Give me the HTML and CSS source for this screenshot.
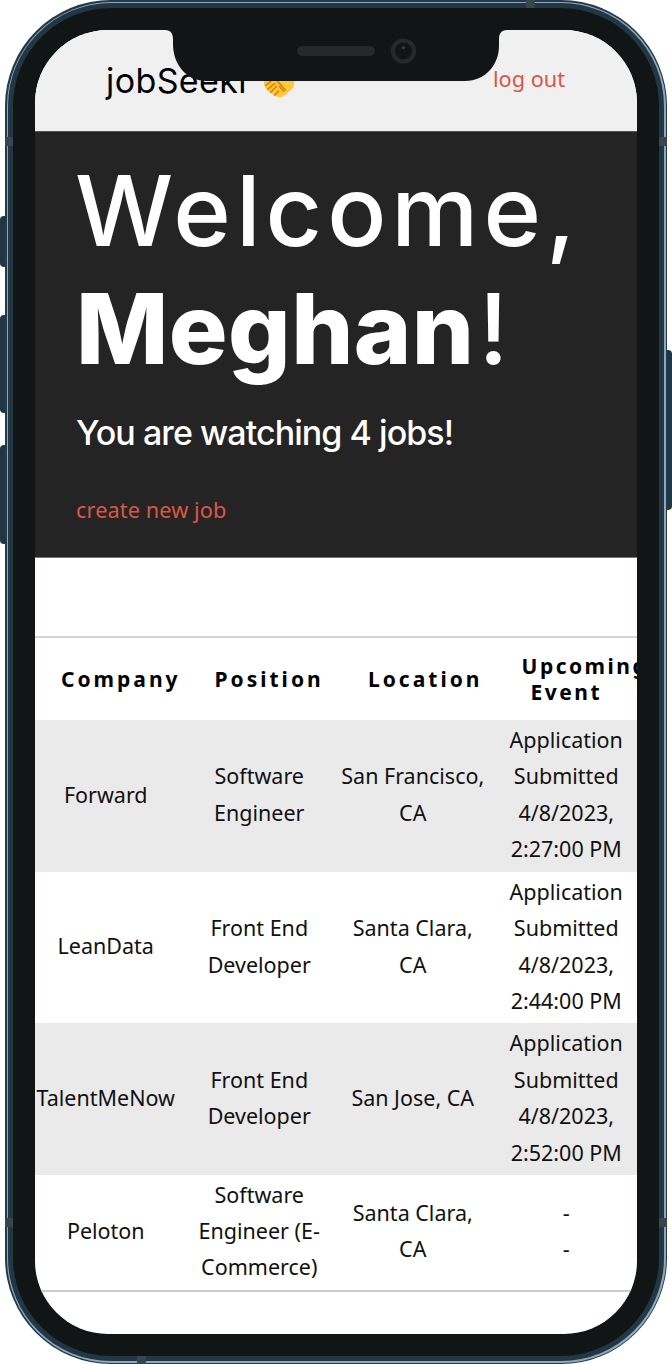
FILE: index.html
```html
<!DOCTYPE html>
<html lang="en">
<head>
<meta charset="utf-8">
<title>jobSeekr</title>
<link rel="stylesheet" href="styles.css">
</head>
<body>
<div class="device">
  <i class="key key-mute"></i><i class="key key-up"></i><i class="key key-down"></i><i class="key key-power"></i>
  <div class="edge"><div class="shine"><div class="rim"><div class="bezel">
    <div class="screen">
      <header class="topbar">
        <div class="brand">jobSeekr
          <svg class="hands" viewBox="0 0 34 34"><path d="M1 12 8 5l9 3 9-3 7 7-1 9c-1 4-4 5-6 7-2 3-4 3-5 4-3 2-5 2-8 0-2-1-4-3-6-4-3-2-5-5-6-8z" fill="#ffc83d"/><path d="M3 21l5-4M5 25l7-6M8 28l6-6M12 31l4-4M12 14l7 7 4 5M17 22l4 5" fill="none" stroke="#d98a12" stroke-width="1.800" stroke-linecap="round"/></svg>
        </div>
        <a class="link logout">log out</a>
      </header>
      <section class="hero">
        <h1><span class="hello">Welcome,</span><span class="name"><b>Meghan</b>!</span></h1>
        <p class="count">You are watching 4 jobs!</p>
        <a class="link create">create new job</a>
      </section>
      <table class="jobs">
        <thead><tr><th>Company</th><th>Position</th><th>Location</th><th class="event">Upcoming<br>Event</th></tr></thead>
        <tbody>
          <tr><td>Forward</td><td>Software<br>Engineer</td><td>San Francisco,<br>CA</td><td>Application<br>Submitted<br>4/8/2023,<br>2:27:00 PM</td></tr>
          <tr><td>LeanData</td><td>Front End<br>Developer</td><td>Santa Clara,<br>CA</td><td>Application<br>Submitted<br>4/8/2023,<br>2:44:00 PM</td></tr>
          <tr><td>TalentMeNow</td><td>Front End<br>Developer</td><td>San Jose, CA</td><td>Application<br>Submitted<br>4/8/2023,<br>2:52:00 PM</td></tr>
          <tr class="last"><td>Peloton</td><td>Software<br>Engineer (E-<br>Commerce)</td><td>Santa Clara,<br>CA</td><td>-<br>-</td></tr>
        </tbody>
      </table>
    </div>
  </div></div></div></div>
  <svg class="notch" viewBox="0 0 342 56" width="342" height="56"><path d="M0 0h342v5c-6 0-8 4-8 9v7c0 18-13 35-34 35H42C21 56 8 39 8 19v-5c0-5-2-9-8-9z" fill="#111516"/><rect x="132" y="21" width="78" height="10" rx="5" fill="#25292b"/><circle cx="238.500" cy="26" r="10.500" fill="none" stroke="#25292b" stroke-width="4.200"/><circle cx="238.500" cy="22.800" r="1.800" fill="#33383a"/></svg>
  <i class="band b1"></i><i class="band b2"></i><i class="band b3"></i><i class="band b4"></i><i class="band b5"></i><i class="band b6"></i>
</div>
</body>
</html>
```
FILE: styles.css
```css
* { box-sizing: border-box; }
body { margin: 0; background: #fff; font-family: "Noto Sans", sans-serif; color: #111; }
.device { position: relative; width: 672px; height: 1364px; padding: 0 5px; overflow: hidden; }
.edge { position: relative; height: 1364px; padding: 1.5px; border-radius: 106px; background: #24394a; }
.shine { height: 100%; padding: 1.5px; border-radius: 104.500px; background: #8aa9be; }
.rim { height: 100%; padding: 5px; border-radius: 103px; background: #223743; }
.bezel { height: 100%; padding: 22px; border-radius: 98px; background: #111516; }
.screen { height: 1304px; border-radius: 73px; background: #fff; overflow: hidden; }

.key { position: absolute; width: 12px; border-radius: 4px; background: #203643; }
.key-mute { left: 0; top: 216px; height: 51px; }
.key-up { left: 0; top: 315px; height: 98px; }
.key-down { left: 0; top: 445px; height: 99px; }
.key-power { right: 0; top: 350px; height: 160px; }
.band { position: absolute; background: #38454b; }
.b1 { left: 526px; top: 0; width: 9px; height: 8px; }
.b2 { left: 5px; top: 137px; width: 8px; height: 9px; }
.b3 { right: 5px; top: 137px; width: 8px; height: 9px; }
.b4 { left: 5px; top: 1218px; width: 8px; height: 9px; }
.b5 { right: 5px; top: 1218px; width: 8px; height: 9px; }
.b6 { left: 137px; top: 1356px; width: 9px; height: 8px; }
.notch { position: absolute; left: 165px; top: 25px; }

.topbar { display: flex; justify-content: space-between; height: 102px; padding: 28px 72px 0 71px; background: #f0f0f0; border-bottom: 1px solid #555; }
.brand { display: flex; gap: 11px; font: 400 34px/45px Inter, sans-serif; color: #000; letter-spacing: 0.400px; }
.hands { width: 33px; height: 33px; margin-top: 7px; }
.link { color: #dc5644; font-size: 21.700px; }
.logout { line-height: 41px; }
.hero { height: 426px; padding: 20px 41px 0 40px; background: #242424; color: #fff; font-family: Inter, sans-serif; border-bottom: 1px solid #777; }
h1 { display: flex; flex-direction: column; margin: 0; font-weight: 450; font-size: 98px; line-height: 118px; white-space: nowrap; }
.hello { letter-spacing: 5px; }
.name { padding-left: 1px; letter-spacing: 0.400px; }
.name b { margin-right: 4px; font-weight: 800; }
.count { margin: 23px 0 0 1px; font-weight: 500; font-size: 34px; line-height: 44px; letter-spacing: -0.940px; white-space: nowrap; }
.create { display: block; margin: 40px 0 0 1px; font-family: "Noto Sans", sans-serif; line-height: 30px; letter-spacing: 0.100px; }

.jobs { width: 614px; margin: 78px 0 0 -6px; table-layout: fixed; border-collapse: collapse; border-top: 2px solid #d4d4d4; border-bottom: 2px solid #ccc; text-align: center; }
.jobs th { height: 83px; padding: 0 32px; font-size: 21px; line-height: 26px; letter-spacing: 3px; color: #000; }
.jobs .event { letter-spacing: 2.500px; }
.jobs td { height: 151.700px; padding: 0 0 2px; font-size: 21.500px; line-height: 36.500px; white-space: nowrap; }
.jobs tbody tr:nth-child(odd) { background: #eaeaea; }
.jobs .last td { height: 116px; padding-bottom: 3px; line-height: 36px; }
```
